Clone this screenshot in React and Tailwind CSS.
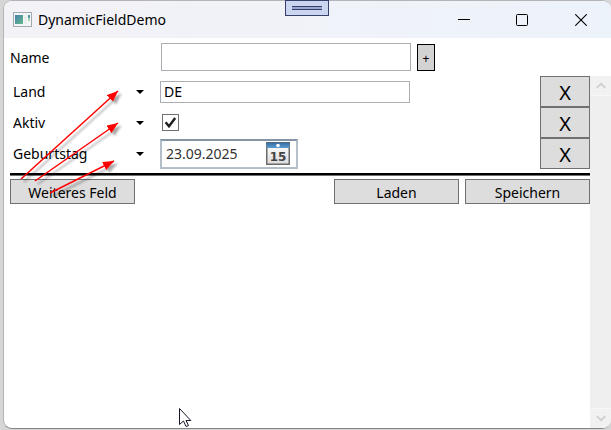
import React, { useState } from "react";

const FIELDS = ["Land", "Aktiv", "Geburtstag"];

function AppIcon() {
  return (
    <svg width="19" height="15" viewBox="0 0 19 15" aria-hidden="true">
      <defs>
        <linearGradient id="pane" x1="0" y1="0" x2="1" y2="1">
          <stop offset="0" stopColor="#4a7fae" />
          <stop offset="1" stopColor="#63b98a" />
        </linearGradient>
      </defs>
      <rect x="0.5" y="0.5" width="18" height="14" fill="#f3f5f6" stroke="#a3a9b0" />
      <rect x="2" y="3" width="8" height="9" fill="url(#pane)" />
      <rect x="11" y="3" width="3" height="9" fill="#e9efec" />
      <rect x="15" y="3" width="2" height="3" fill="#4f93a8" />
      <rect x="15" y="6" width="2" height="3" fill="#a9d6b5" />
    </svg>
  );
}

function TitleBar() {
  return (
    <header className="flex h-[37px] shrink-0 items-center bg-linear-to-r from-[#f3f2f6] to-[#edf3fb] pl-[9px]">
      <AppIcon />
      <h1 className="ml-[6px] flex-1 text-sm leading-5">DynamicFieldDemo</h1>
      <button type="button" aria-label="Minimieren" className="flex h-full w-[58px] items-center justify-center">
        <svg width="12" height="12" viewBox="0 0 12 12"><path d="M0 5.5H12" stroke="#000" /></svg>
      </button>
      <button type="button" aria-label="Maximieren" className="flex h-full w-[58px] items-center justify-center">
        <svg width="12" height="12" viewBox="0 0 12 12"><rect x="0.5" y="0.5" width="11" height="11" rx="1" fill="none" stroke="#000" /></svg>
      </button>
      <button type="button" aria-label="Schließen" className="flex h-full w-[60px] items-center justify-center">
        <svg width="12" height="12" viewBox="0 0 12 12"><path d="M0.3 0.3L11.7 11.7M11.7 0.3L0.3 11.7" stroke="#000" strokeWidth="1.1" /></svg>
      </button>
    </header>
  );
}

function FieldRow({ name, children }) {
  const [field, setField] = useState(name);
  return (
    <div className="flex h-[31px] items-center">
      <div className="relative mr-[14px] w-[136px]">
        <select
          aria-label="Feld"
          value={field}
          onChange={(e) => setField(e.target.value)}
          className="block h-6 w-full appearance-none bg-transparent pl-[3px] text-sm leading-5"
        >
          {FIELDS.map((f) => (
            <option key={f}>{f}</option>
          ))}
        </select>
        <svg className="pointer-events-none absolute top-[10px] right-[2px]" width="8" height="4" viewBox="0 0 8 4" aria-hidden="true">
          <path d="M0 0H8L4 4Z" fill="#000" />
        </svg>
      </div>
      <div className="flex flex-1 items-center">{children}</div>
      <button
        type="button"
        aria-label={"X " + name}
        className="flex h-[31px] w-[50px] items-center justify-center border border-[#707070] bg-[#dddddd] pt-0.5 text-xl leading-6"
      >
        X
      </button>
    </div>
  );
}

function CheckField() {
  const [on, setOn] = useState(true);
  return (
    <label className="relative ml-[2px] block size-[17px]">
      <input
        type="checkbox"
        aria-label="Aktiv"
        checked={on}
        onChange={(e) => setOn(e.target.checked)}
        className="block size-[17px] appearance-none border border-[#707070] bg-white"
      />
      {on && (
        <svg className="pointer-events-none absolute inset-0" width="17" height="17" viewBox="0 0 17 17" aria-hidden="true">
          <path d="M3.6 8.2L7 12.2L13.2 4" fill="none" stroke="#212121" strokeWidth="2.5" />
        </svg>
      )}
    </label>
  );
}

function CalendarIcon() {
  return (
    <svg width="24" height="23" viewBox="0 0 24 23" aria-hidden="true">
      <defs>
        <linearGradient id="sheet" x1="0" y1="0" x2="0" y2="1">
          <stop offset="0" stopColor="#ffffff" />
          <stop offset="1" stopColor="#dcdcdc" />
        </linearGradient>
        <linearGradient id="head" x1="0" y1="0" x2="0" y2="1">
          <stop offset="0" stopColor="#356a9f" />
          <stop offset="1" stopColor="#5c9cd2" />
        </linearGradient>
      </defs>
      <rect x="0.75" y="0.75" width="22.5" height="21.5" fill="url(#sheet)" stroke="#6b6b6b" strokeWidth="1.5" />
      <rect x="0.5" y="0.5" width="23" height="5.5" fill="url(#head)" />
      <circle cx="12" cy="3.5" r="1.8" fill="#fff" />
      <text x="12" y="19" textAnchor="middle" fontSize="12" fontWeight="600" fontFamily="'DejaVu Sans', sans-serif" fill="#444">15</text>
    </svg>
  );
}

function DateField() {
  return (
    <div className="flex h-[30px] w-[138px] items-center border-2 border-[#b4bfca] border-t-[#8495a6] bg-white pr-[6px] pl-1">
      <input
        type="text"
        aria-label="Geburtstag"
        defaultValue="23.09.2025"
        className="w-0 flex-1 bg-transparent text-sm leading-5 text-[#333333] outline-none"
      />
      <button type="button" aria-label="Kalender">
        <CalendarIcon />
      </button>
    </div>
  );
}

function ActionButton({ children }) {
  return (
    <button type="button" className="h-[25px] w-[125px] border border-[#707070] bg-[#dddddd] pt-0.5 text-sm leading-5">
      {children}
    </button>
  );
}

function ScrollBar() {
  return (
    <div className="flex w-[21px] shrink-0 flex-col justify-between bg-[#efefef]" aria-hidden="true">
      <div className="flex h-5 items-center justify-center border-b border-[#f7f7f7] bg-[#f1f1f1]">
        <svg width="10" height="7" viewBox="0 0 10 7"><path d="M0.8 6L5 1.6L9.2 6" fill="none" stroke="#d2d2d2" strokeWidth="2" /></svg>
      </div>
      <div className="flex h-5 items-center justify-center border-t border-[#f7f7f7] bg-[#f1f1f1]">
        <svg width="10" height="7" viewBox="0 0 10 7"><path d="M0.8 1L5 5.4L9.2 1" fill="none" stroke="#d2d2d2" strokeWidth="2" /></svg>
      </div>
    </div>
  );
}

function Annotations() {
  return (
    <svg className="pointer-events-none absolute top-0 left-0" width="200" height="430" viewBox="0 0 200 430" aria-hidden="true">
      <defs>
        <marker id="tip" markerUnits="userSpaceOnUse" markerWidth="12" markerHeight="9" refX="11" refY="4.5" orient="auto">
          <path d="M0 0L11 4.5L0 9Z" fill="#ff0000" />
        </marker>
        <filter id="shade" filterUnits="userSpaceOnUse" x="0" y="70" width="150" height="140">
          <feDropShadow dx="3" dy="3" stdDeviation="1.3" floodColor="#000" floodOpacity="0.35" />
        </filter>
      </defs>
      <g stroke="#ff0000" strokeWidth="1.5" filter="url(#shade)">
        <path d="M21 179L118 91" markerEnd="url(#tip)" />
        <path d="M35 181L118 123" markerEnd="url(#tip)" />
        <path d="M50 193L114 161" markerEnd="url(#tip)" />
      </g>
      <path d="M179.5 408.5V424.5L183.5 421L186 426.5L188.5 425.5L186 420.5H190.8Z" fill="#fff" stroke="#15152a" />
    </svg>
  );
}

export default function App() {
  return (
    <div className="relative flex h-screen min-h-[260px] bg-[#d6d6d6] pb-px pl-[3px] font-['Noto_Sans','Open_Sans',sans-serif] text-black">
      <div className="flex flex-1 flex-col overflow-hidden rounded-[9px] border-t border-b border-l border-t-[#b4b4b6] border-b-[#858585] border-l-[#b4b4b4] bg-white">
        <TitleBar />
        <div className="flex h-[38px] shrink-0 items-center pl-[6px]">
          <label htmlFor="name" className="w-[151px] pt-0.5 text-sm leading-5">Name</label>
          <input id="name" type="text" className="h-7 w-[250px] border border-[#abadb3] px-1 text-sm outline-none" />
          <button type="button" className="ml-[6px] flex h-[27px] w-[18px] items-center justify-center border border-black bg-[#d3d3d3] pt-1 text-xs leading-4">
            +
          </button>
        </div>
        <div className="flex min-h-0 flex-1">
          <main className="flex-1 pl-[6px]">
            <FieldRow name="Land">
              <input
                type="text"
                aria-label="Land"
                defaultValue="DE"
                className="h-[22px] w-[250px] border border-[#abadb3] px-[3px] text-sm leading-5 outline-none"
              />
            </FieldRow>
            <FieldRow name="Aktiv">
              <CheckField />
            </FieldRow>
            <FieldRow name="Geburtstag">
              <DateField />
            </FieldRow>
            <hr className="mt-1 h-[3px] border-0 border-b border-[#707070] bg-black" />
            <div className="mt-[3px] flex gap-[6px]">
              <ActionButton>Weiteres Feld</ActionButton>
              <span className="flex-1" />
              <ActionButton>Laden</ActionButton>
              <ActionButton>Speichern</ActionButton>
            </div>
          </main>
          <ScrollBar />
        </div>
      </div>
      <button
        type="button"
        aria-label="Werkzeugleiste"
        className="absolute top-0 left-1/2 flex h-4 w-[44px] -translate-x-[21px] items-center justify-center border border-[#36406f] bg-[#ccd5f0]"
      >
        <span className="h-1 w-[30px] border-y border-[#36406f] bg-[#9ba7cc]" />
      </button>
      <Annotations />
    </div>
  );
}
